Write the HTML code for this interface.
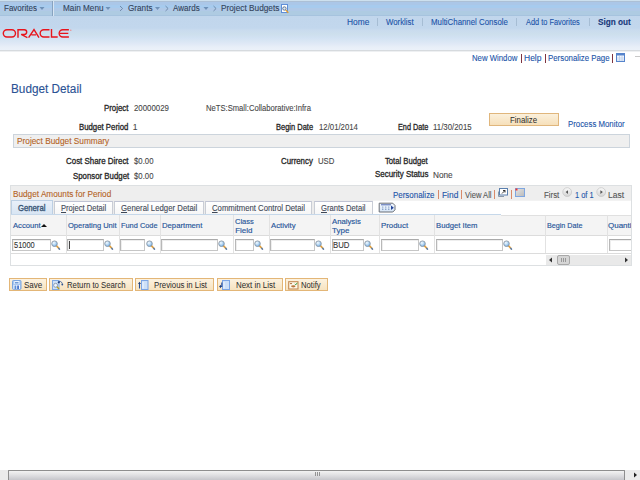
<!DOCTYPE html>
<html><head><meta charset="utf-8">
<style>
html,body{margin:0;padding:0;width:640px;height:480px;overflow:hidden;background:#fff;}
body{position:relative;font-family:"Liberation Sans",sans-serif;}
.a{position:absolute;}
svg.a{overflow:visible;}
.t{position:absolute;white-space:nowrap;line-height:12px;font-size:8px;color:#333;-webkit-text-stroke:0.1px currentColor;}
.vs{position:absolute;width:1px;top:215px;height:38px;background:#e2e2e2;}
.inp{position:absolute;top:239px;height:10px;border:1px solid #c6c6c6;border-top-color:#aaaaaa;border-left-color:#b8b8b8;background:#fff;box-shadow:inset 1px 1px 0 #eeeeee;}
.tab{position:absolute;top:201px;height:12px;border:1px solid #c9cdd5;border-top-color:#c0c4d4;border-bottom:none;background:linear-gradient(#fff,#f6f6f6);}
.btn{position:absolute;top:278px;height:11px;border:1px solid #e3b677;background:linear-gradient(#fcf2e0,#f7e3c0);}
.hsep{position:absolute;width:1px;top:18px;height:8px;background:#a6bdd4;}
.rsep{position:absolute;width:1px;top:54px;height:9px;background:#7e3440;}
.osep{position:absolute;width:1px;top:190px;height:9px;background:#d98a6a;}
</style></head><body>
<svg width="0" height="0" style="position:absolute">
<defs>
<radialGradient id="mg" cx="0.38" cy="0.35" r="0.75"><stop offset="0" stop-color="#f6fbff"/><stop offset="0.55" stop-color="#a8d0f2"/><stop offset="1" stop-color="#5e9ad6"/></radialGradient>
<symbol id="mag" viewBox="0 0 11 11">
 <path d="M5.6,5.9L8.1,8.6" stroke="#e0a040" stroke-width="1.6" stroke-linecap="round"/>
 <path d="M7.7,8.2L8.6,9.2" stroke="#5a80b4" stroke-width="1.3" stroke-linecap="round"/>
 <circle cx="3.5" cy="3.7" r="2.8" fill="url(#mg)" stroke="#8d96a0" stroke-width="0.85"/>
</symbol>
<linearGradient id="cg" x1="0" y1="0" x2="0" y2="1"><stop offset="0" stop-color="#fbfbfb"/><stop offset="1" stop-color="#d2d2d2"/></linearGradient>
</defs></svg>

<!-- top nav bar -->
<div class="a" style="left:0;top:0;width:640px;height:16px;background:linear-gradient(#cde0ee 0,#cde0ee 1px,#acc0d6 1px,#acc0d6 2px,#abc7e8 2px,#abc7e8 5px,#a7cbee 5px,#a7cbee 8px,#b0c9e7 8px,#b0c9e7 11px,#aecbe2 11px,#aecbe2 15px,#a6c3de 15px);"></div>
<div class="a" style="left:52px;top:1px;width:1px;height:15px;background:#87a3c0;"></div>
<div class="a" style="left:53px;top:1px;width:1px;height:15px;background:#d8e5f2;"></div>
<svg class="a" style="left:0;top:0" width="640" height="16">
 <g fill="#6f91b8">
  <path d="M39.5,7h5l-2.5,3z"/>
  <path d="M105.5,7h5l-2.5,3z"/>
  <path d="M155,7h5l-2.5,3z"/>
  <path d="M203.5,7h5l-2.5,3z"/>
 </g>
 <g fill="none" stroke="#6a84a4" stroke-width="0.9">
  <path d="M120,6l2.6,2.5l-2.6,2.5"/>
  <path d="M165.5,6l2.6,2.5l-2.6,2.5"/>
  <path d="M213.5,6l2.6,2.5l-2.6,2.5"/>
 </g>
 <rect x="281.5" y="4.5" width="6" height="8" fill="#fff" stroke="#5f8fd8" stroke-width="1"/>
 <circle cx="284.4" cy="8.5" r="1.7" fill="#dfe9f5" stroke="#556c88" stroke-width="0.9"/>
 <path d="M285.7,9.9l2.6,2.9" stroke="#e39a2c" stroke-width="1.3"/>
</svg>

<!-- header band -->
<div class="a" style="left:0;top:16px;width:640px;height:34px;background:linear-gradient(#c1d6ec 0,#c2d7ed 12px,#c9dbee 14px,#cddfed 18px,#d2e2f3 22px,#d9e6f4 25px,#e0e9f6 28px,#e8eff8 31px,#ebf1f9 34px);"></div>
<div class="a" style="left:0;top:50px;width:640px;height:1px;background:#d6dade;"></div>
<div class="a" style="left:0;top:51px;width:640px;height:1px;background:#eef0f2;"></div>

<!-- ORACLE logo -->
<svg class="a" style="left:0;top:0" width="80" height="45">
 <g fill="none" stroke="#e8141c" stroke-width="1.4">
  <rect x="3.3" y="29.7" width="12.2" height="7.3" rx="3.65"/>
  <path d="M18,37.7V29.7H24.3A2.4,2.4 0 0 1 24.3,34.5H21.2L27.4,37.7"/>
  <path d="M28.6,37.7L34,29.6L39,37.7M31.4,34.9H36"/>
  <path d="M49.5,29.7H43.8A3.65,3.65 0 0 0 43.8,37H49.5"/>
  <path d="M51.5,29V37H57.7"/>
  <path d="M68.9,29.7H62.8A3.65,3.65 0 0 0 62.8,37H68.9M60,33.35H68.3"/>
 </g>
 <circle cx="70.8" cy="30.2" r="0.7" fill="#e88"/>
</svg>

<div class="hsep" style="left:377px;"></div>
<div class="hsep" style="left:422px;"></div>
<div class="hsep" style="left:516px;"></div>
<div class="hsep" style="left:589px;"></div>

<div class="rsep" style="left:521px;"></div>
<div class="rsep" style="left:545px;"></div>
<div class="rsep" style="left:612px;"></div>
<svg class="a" style="left:616px;top:53px" width="9" height="9">
 <rect x="0.5" y="0.5" width="8" height="8" fill="#f2f6fc" stroke="#5684cc"/>
 <rect x="0.5" y="0.5" width="8" height="2" fill="#5684cc"/>
 <path d="M1,5h7M1,7h7M3.5,3v5M6,3v5" stroke="#bccfea" stroke-width="0.8"/>
</svg>
<div class="a" style="left:635px;top:56px;width:5px;height:1px;background:#c8c8c8;"></div>

<!-- finalize button -->
<div class="a" style="left:489px;top:113px;width:68px;height:11px;border:1px solid #e0b67c;background:linear-gradient(#fbf0dc,#f6e0ba);"></div>

<!-- section bar -->
<div class="a" style="left:13px;top:134px;width:615px;height:12px;background:#efefef;border:1px solid #ccd4dc;"></div>

<!-- grid -->
<div class="a" style="left:10px;top:185px;width:620px;height:79px;border:1px solid #dde0e2;background:#fff;"></div>
<div class="a" style="left:11px;top:186px;width:620px;height:14px;background:#eeeeee;"></div>
<div class="osep" style="left:438px;"></div>
<div class="osep" style="left:461px;"></div>
<div class="osep" style="left:494px;"></div>
<div class="osep" style="left:511px;"></div>

<!-- tabs -->
<div class="a" style="left:11px;top:200px;width:362px;height:14px;background:#ececec;"></div>
<div class="a" style="left:373px;top:200px;width:258px;height:1px;background:#f2f2f2;"></div>
<div class="tab" style="left:11px;top:200px;height:13px;width:40px;background:linear-gradient(#e9f0f9,#d8e5f3);border-color:#bccfe3;"></div>
<div class="tab" style="left:54px;width:57px;"></div>
<div class="tab" style="left:114px;width:88px;"></div>
<div class="tab" style="left:205px;width:105px;"></div>
<div class="tab" style="left:314px;width:57px;"></div>
<div class="a" style="left:11px;top:214px;width:490px;height:1px;background:#c6d8ea;"></div>

<!-- header row -->
<div class="a" style="left:11px;top:215px;width:620px;height:20px;background:#f4f4f4;"></div>
<div class="a" style="left:501px;top:215px;width:130px;height:1px;background:#e0e0e0;"></div>
<div class="a" style="left:11px;top:235px;width:620px;height:1px;background:#dcdcdc;"></div>
<div class="a" style="left:11px;top:253px;width:620px;height:1px;background:#dcdcdc;"></div>
<div class="vs" style="left:66px;"></div>
<div class="vs" style="left:119px;"></div>
<div class="vs" style="left:160px;"></div>
<div class="vs" style="left:233px;"></div>
<div class="vs" style="left:269px;"></div>
<div class="vs" style="left:330px;"></div>
<div class="vs" style="left:379px;"></div>
<div class="vs" style="left:434px;"></div>
<div class="vs" style="left:545px;"></div>
<div class="vs" style="left:607px;"></div>

<!-- inputs -->
<div class="inp" style="left:12px;width:37px;"></div>
<div class="inp" style="left:67px;width:35px;"></div>
<div class="inp" style="left:120px;width:23px;"></div>
<div class="inp" style="left:161px;width:55px;"></div>
<div class="inp" style="left:235px;width:17px;"></div>
<div class="inp" style="left:270px;width:43px;"></div>
<div class="inp" style="left:332px;width:30px;"></div>
<div class="inp" style="left:381px;width:36px;"></div>
<div class="inp" style="left:436px;width:65px;"></div>
<div class="inp" style="left:609px;width:40px;"></div>
<div class="a" style="left:69px;top:241px;width:1px;height:8px;background:#444;"></div>

<svg class="a" style="left:51px;top:240px" width="11" height="11"><use href="#mag"/></svg>
<svg class="a" style="left:104px;top:240px" width="11" height="11"><use href="#mag"/></svg>
<svg class="a" style="left:146px;top:240px" width="11" height="11"><use href="#mag"/></svg>
<svg class="a" style="left:218px;top:240px" width="11" height="11"><use href="#mag"/></svg>
<svg class="a" style="left:254px;top:240px" width="11" height="11"><use href="#mag"/></svg>
<svg class="a" style="left:315px;top:240px" width="11" height="11"><use href="#mag"/></svg>
<svg class="a" style="left:364px;top:240px" width="11" height="11"><use href="#mag"/></svg>
<svg class="a" style="left:419px;top:240px" width="11" height="11"><use href="#mag"/></svg>
<svg class="a" style="left:503px;top:240px" width="11" height="11"><use href="#mag"/></svg>

<!-- buttons -->
<div class="btn" style="left:9px;width:36px;"></div>
<div class="btn" style="left:49px;width:82px;"></div>
<div class="btn" style="left:135px;width:77px;"></div>
<div class="btn" style="left:217px;width:64px;"></div>
<div class="btn" style="left:285px;width:41px;"></div>
<!-- save icon -->
<svg class="a" style="left:12px;top:280px" width="10" height="10">
 <rect x="0.5" y="0.5" width="8.5" height="8.8" rx="0.8" fill="#a9c8f0" stroke="#7aa6e0"/>
 <rect x="2.3" y="1" width="5" height="3" fill="#eaf3fe"/>
 <rect x="3" y="2" width="3.5" height="1.5" fill="#6f9ad6"/>
 <rect x="1.5" y="5" width="6.5" height="4" fill="#f4f8ff"/>
 <rect x="2.5" y="5.5" width="1.8" height="3.5" fill="#5b8fd8"/>
 <rect x="5.3" y="5.5" width="1.5" height="3.5" fill="#2459c0"/>
</svg>
<!-- return to search icon -->
<svg class="a" style="left:51px;top:279px" width="13" height="12">
 <rect x="1.5" y="1.5" width="6.5" height="9" fill="#cfe2f8" stroke="#7fa9e2"/>
 <circle cx="4.6" cy="6.3" r="2" fill="#eef6ff" stroke="#7b8aa0" stroke-width="0.8"/>
 <path d="M6,7.8L8,10" stroke="#b8a020" stroke-width="1.3"/>
 <path d="M7.5,3C9,2 10.5,2.3 11.2,4.5" fill="none" stroke="#3a5f9a" stroke-width="0.9"/>
 <circle cx="7.8" cy="3.3" r="1.1" fill="#1e3f80"/>
 <circle cx="11.3" cy="5.5" r="0.9" fill="#2a4f90"/>
</svg>
<!-- previous icon -->
<svg class="a" style="left:138px;top:280px" width="12" height="11">
 <rect x="3.5" y="0.5" width="6.5" height="9" fill="#cde0f8" stroke="#7aa4e4"/>
 <path d="M5,2V8.5" stroke="#eef5ff" stroke-width="1"/>
 <path d="M1.5,8.5V3.5" stroke="#2a4e94" stroke-width="1.1"/>
 <path d="M0,4L1.5,1.8L3,4z" fill="#1e3f80"/>
</svg>
<!-- next icon -->
<svg class="a" style="left:219px;top:280px" width="12" height="11">
 <rect x="3.5" y="0.5" width="7" height="9" fill="#cde0f8" stroke="#7aa4e4"/>
 <path d="M5,2V8.5" stroke="#eef5ff" stroke-width="1"/>
 <path d="M2.8,2.5V6.5H1" fill="none" stroke="#2a4e94" stroke-width="1.1"/>
 <path d="M2,4.8L0,6.5L2,8.2z" fill="#1e3f80"/>
</svg>
<!-- notify icon -->
<svg class="a" style="left:288px;top:281px" width="11" height="9">
 <rect x="0.7" y="0.7" width="9.3" height="7.3" fill="#fdf8ea" stroke="#c58a55" stroke-width="1.1"/>
 <ellipse cx="3" cy="2.6" rx="1.2" ry="0.6" fill="#a86a38"/>
 <ellipse cx="5.3" cy="5.3" rx="2.2" ry="1.1" fill="#b8763e"/>
 <path d="M6.8,3L7.8,3.8L9.3,1.8" fill="none" stroke="#3aa040" stroke-width="1"/>
</svg>

<span class="t" style="left:4.06px;top:2px;font-size:8.5px;color:#33435a;transform:scaleX(0.9412);transform-origin:0 0;">Favorites</span>
<span class="t" style="left:62.79px;top:2px;font-size:8.5px;color:#33435a;transform:scaleX(0.9634);transform-origin:0 0;">Main Menu</span>
<span class="t" style="left:127.50px;top:2px;font-size:8.5px;color:#33435a;transform:scaleX(0.9600);transform-origin:0 0;">Grants</span>
<span class="t" style="left:173.00px;top:2px;font-size:8.5px;color:#33435a;transform:scaleX(0.9464);transform-origin:0 0;">Awards</span>
<span class="t" style="left:220.53px;top:2px;font-size:8.5px;color:#33435a;transform:scaleX(0.9729);transform-origin:0 0;">Project Budgets</span>
<span class="t" style="left:346.81px;top:16px;font-size:8.5px;color:#1a53a8;transform:scaleX(0.9857);transform-origin:0 0;">Home</span>
<span class="t" style="left:386.20px;top:16px;font-size:8.5px;color:#1a53a8;transform:scaleX(0.9200);transform-origin:0 0;">Worklist</span>
<span class="t" style="left:430.88px;top:16px;font-size:8.5px;color:#1a53a8;transform:scaleX(0.9244);transform-origin:0 0;">MultiChannel Console</span>
<span class="t" style="left:525.60px;top:16px;font-size:8.5px;color:#1a53a8;transform:scaleX(0.8694);transform-origin:0 0;">Add to Favorites</span>
<span class="t" style="left:597.70px;top:16px;font-size:8.5px;color:#17377a;font-weight:bold;transform:scaleX(0.9647);transform-origin:0 0;">Sign out</span>
<span class="t" style="left:472.29px;top:52px;font-size:8.5px;color:#1a53a8;transform:scaleX(0.9143);transform-origin:0 0;">New Window</span>
<span class="t" style="left:524.00px;top:52px;font-size:8.5px;color:#1a53a8;">Help</span>
<span class="t" style="left:547.68px;top:52px;font-size:8.5px;color:#1a53a8;transform:scaleX(0.9246);transform-origin:0 0;">Personalize Page</span>
<span class="t" style="left:10.52px;top:83px;font-size:12px;color:#2a5294;transform:scaleX(0.9803);transform-origin:0 0;">Budget Detail</span>
<span class="t" style="left:103.50px;top:102px;font-size:8.5px;color:#262626;-webkit-text-stroke:0.3px #262626;transform:scaleX(0.9259);transform-origin:0 0;">Project</span>
<span class="t" style="left:133.80px;top:102px;font-size:8.5px;color:#474747;transform:scaleX(0.9243);transform-origin:0 0;">20000029</span>
<span class="t" style="left:205.60px;top:102px;font-size:8.5px;color:#474747;transform:scaleX(0.8991);transform-origin:0 0;">NeTS:Small:Collaborative:Infra</span>
<span class="t" style="left:79.00px;top:121px;font-size:8.5px;color:#262626;-webkit-text-stroke:0.3px #262626;transform:scaleX(0.9167);transform-origin:0 0;">Budget Period</span>
<span class="t" style="left:132.80px;top:121px;font-size:8.5px;color:#474747;">1</span>
<span class="t" style="left:276.20px;top:121px;font-size:8.5px;color:#262626;-webkit-text-stroke:0.3px #262626;transform:scaleX(0.8810);transform-origin:0 0;">Begin Date</span>
<span class="t" style="left:318.59px;top:121px;font-size:8.5px;color:#474747;transform:scaleX(0.9146);transform-origin:0 0;">12/01/2014</span>
<span class="t" style="left:398.00px;top:121px;font-size:8.5px;color:#262626;-webkit-text-stroke:0.3px #262626;transform:scaleX(0.8571);transform-origin:0 0;">End Date</span>
<span class="t" style="left:433.28px;top:121px;font-size:8.5px;color:#474747;transform:scaleX(0.9220);transform-origin:0 0;">11/30/2015</span>
<span class="t" style="left:509.83px;top:114px;font-size:8.5px;color:#2a2a2a;transform:scaleX(0.9232);transform-origin:0 0;-webkit-text-stroke:0;">Finalize</span>
<span class="t" style="left:567.58px;top:118px;font-size:8.5px;color:#1a53a8;transform:scaleX(0.9217);transform-origin:0 0;">Process Monitor</span>
<span class="t" style="left:17.02px;top:135px;font-size:8.5px;color:#b4631f;transform:scaleX(0.9763);transform-origin:0 0;">Project Budget Summary</span>
<span class="t" style="left:66.00px;top:155px;font-size:8.5px;color:#262626;-webkit-text-stroke:0.3px #262626;transform:scaleX(0.9328);transform-origin:0 0;">Cost Share Direct</span>
<span class="t" style="left:133.80px;top:155px;font-size:8.5px;color:#474747;transform:scaleX(0.9143);transform-origin:0 0;">$0.00</span>
<span class="t" style="left:72.50px;top:170px;font-size:8.5px;color:#262626;-webkit-text-stroke:0.3px #262626;transform:scaleX(0.9221);transform-origin:0 0;">Sponsor Budget</span>
<span class="t" style="left:133.80px;top:170px;font-size:8.5px;color:#474747;transform:scaleX(0.9143);transform-origin:0 0;">$0.00</span>
<span class="t" style="left:281.20px;top:155px;font-size:8.5px;color:#262626;-webkit-text-stroke:0.3px #262626;transform:scaleX(0.9229);transform-origin:0 0;">Currency</span>
<span class="t" style="left:318.09px;top:155px;font-size:8.5px;color:#474747;transform:scaleX(0.9118);transform-origin:0 0;">USD</span>
<span class="t" style="left:384.80px;top:155px;font-size:8.5px;color:#262626;-webkit-text-stroke:0.3px #262626;transform:scaleX(0.9042);transform-origin:0 0;">Total Budget</span>
<span class="t" style="left:375.20px;top:168px;font-size:8.5px;color:#262626;-webkit-text-stroke:0.3px #262626;transform:scaleX(0.9351);transform-origin:0 0;">Security Status</span>
<span class="t" style="left:432.93px;top:169px;font-size:8.5px;color:#474747;transform:scaleX(0.9684);transform-origin:0 0;">None</span>
<span class="t" style="left:12.63px;top:188px;font-size:8.5px;color:#b4631f;transform:scaleX(0.9670);transform-origin:0 0;">Budget Amounts for Period</span>
<span class="t" style="left:392.87px;top:189px;font-size:8.5px;color:#1a53a8;transform:scaleX(0.9349);transform-origin:0 0;">Personalize</span>
<span class="t" style="left:441.81px;top:189px;font-size:8.5px;color:#1a53a8;transform:scaleX(0.9867);transform-origin:0 0;">Find</span>
<span class="t" style="left:465.00px;top:189px;font-size:8.5px;color:#555;transform:scaleX(0.8966);transform-origin:0 0;">View All</span>
<span class="t" style="left:544.08px;top:189px;font-size:8.5px;color:#555;transform:scaleX(0.9250);transform-origin:0 0;">First</span>
<span class="t" style="left:574.83px;top:189px;font-size:8.5px;color:#1a53a8;transform:scaleX(0.8750);transform-origin:0 0;">1 of 1</span>
<span class="t" style="left:608.00px;top:189px;font-size:8.5px;color:#555;">Last</span>
<span class="t" style="left:18.00px;top:202px;font-size:8.5px;color:#365474;-webkit-text-stroke:0.35px #365474;transform:scaleX(0.9067);transform-origin:0 0;">General</span>
<span class="t" style="left:61.00px;top:202px;font-size:8.5px;color:#3e4856;transform:scaleX(0.8920);transform-origin:0 0;"><u>P</u>roject Detail</span>
<span class="t" style="left:121.00px;top:202px;font-size:8.5px;color:#3e4856;transform:scaleX(0.9157);transform-origin:0 0;"><u>G</u>eneral Ledger Detail</span>
<span class="t" style="left:212.00px;top:202px;font-size:8.5px;color:#3e4856;transform:scaleX(0.9118);transform-origin:0 0;"><u>C</u>ommitment Control Detail</span>
<span class="t" style="left:321.00px;top:202px;font-size:8.5px;color:#3e4856;transform:scaleX(0.8980);transform-origin:0 0;"><u>G</u>rants Detail</span>
<span class="t" style="left:12.80px;top:220px;font-size:8px;color:#28569a;-webkit-text-stroke:0.16px #28569a;transform:scaleX(0.9552);transform-origin:0 0;">Account</span>
<span class="t" style="left:68.00px;top:220px;font-size:8px;color:#28569a;-webkit-text-stroke:0.16px #28569a;transform:scaleX(0.9412);transform-origin:0 0;">Operating Unit</span>
<span class="t" style="left:121.00px;top:220px;font-size:8px;color:#28569a;-webkit-text-stroke:0.16px #28569a;transform:scaleX(0.9231);transform-origin:0 0;">Fund Code</span>
<span class="t" style="left:161.50px;top:220px;font-size:8px;color:#28569a;-webkit-text-stroke:0.16px #28569a;transform:scaleX(0.9643);transform-origin:0 0;">Department</span>
<span class="t" style="left:270.80px;top:220px;font-size:8px;color:#28569a;-webkit-text-stroke:0.16px #28569a;transform:scaleX(0.9680);transform-origin:0 0;">Activity</span>
<span class="t" style="left:381.00px;top:220px;font-size:8px;color:#28569a;-webkit-text-stroke:0.16px #28569a;transform:scaleX(0.9815);transform-origin:0 0;">Product</span>
<span class="t" style="left:435.80px;top:220px;font-size:8px;color:#28569a;-webkit-text-stroke:0.16px #28569a;transform:scaleX(0.9628);transform-origin:0 0;">Budget Item</span>
<span class="t" style="left:547.00px;top:220px;font-size:8px;color:#28569a;-webkit-text-stroke:0.16px #28569a;transform:scaleX(0.8974);transform-origin:0 0;">Begin Date</span>
<span class="t" style="left:608.00px;top:220px;font-size:8px;color:#28569a;-webkit-text-stroke:0.16px #28569a;">Quantity</span>
<span class="t" style="left:235.20px;top:216px;font-size:8px;color:#28569a;-webkit-text-stroke:0.16px #28569a;transform:scaleX(0.9400);transform-origin:0 0;">Class</span>
<span class="t" style="left:235.20px;top:225px;font-size:8px;color:#28569a;-webkit-text-stroke:0.16px #28569a;">Field</span>
<span class="t" style="left:332.00px;top:216px;font-size:8px;color:#28569a;-webkit-text-stroke:0.16px #28569a;transform:scaleX(0.9667);transform-origin:0 0;">Analysis</span>
<span class="t" style="left:332.00px;top:225px;font-size:8px;color:#28569a;-webkit-text-stroke:0.16px #28569a;">Type</span>
<span class="t" style="left:14.30px;top:239px;font-size:8.5px;color:#333;transform:scaleX(0.8750);transform-origin:0 0;">51000</span>
<span class="t" style="left:332.89px;top:239px;font-size:8.5px;color:#333;transform:scaleX(0.9118);transform-origin:0 0;">BUD</span>
<span class="t" style="left:24.06px;top:279px;font-size:8.5px;color:#2a2a2a;transform:scaleX(0.9444);transform-origin:0 0;-webkit-text-stroke:0;">Save</span>
<span class="t" style="left:66.59px;top:279px;font-size:8.5px;color:#2a2a2a;transform:scaleX(0.9127);transform-origin:0 0;-webkit-text-stroke:0;">Return to Search</span>
<span class="t" style="left:153.68px;top:279px;font-size:8.5px;color:#2a2a2a;transform:scaleX(0.9193);transform-origin:0 0;-webkit-text-stroke:0;">Previous in List</span>
<span class="t" style="left:235.57px;top:279px;font-size:8.5px;color:#2a2a2a;transform:scaleX(0.9317);transform-origin:0 0;-webkit-text-stroke:0;">Next in List</span>
<span class="t" style="left:301.10px;top:279px;font-size:8.5px;color:#2a2a2a;transform:scaleX(0.9048);transform-origin:0 0;-webkit-text-stroke:0;">Notify</span>

<!-- clip right side of grid -->
<div class="a" style="left:632px;top:186px;width:8px;height:80px;background:#fff;"></div>
<div class="a" style="left:631px;top:185px;width:1px;height:81px;background:#dde0e2;"></div>

<!-- sort arrow -->
<svg class="a" style="left:41px;top:223px" width="6" height="5"><path d="M0,4L3,1L6,4z" fill="#111"/></svg>
<!-- view all icon -->
<svg class="a" style="left:497px;top:187px" width="12" height="11">
 <rect x="2.5" y="1.5" width="8" height="6.5" fill="#fff" stroke="#5a7fae"/>
 <path d="M1.5,4.5V9.5H7" fill="none" stroke="#8a98aa"/>
 <path d="M5,6.5L8,3.5M6,3.5H8V5.5" fill="none" stroke="#222" stroke-width="0.9"/>
</svg>
<!-- spreadsheet icon -->
<svg class="a" style="left:514px;top:187px" width="12" height="11">
 <defs><linearGradient id="sg" x1="0" y1="0" x2="1" y2="1"><stop offset="0" stop-color="#e5e5e5"/><stop offset="1" stop-color="#b9b9b9"/></linearGradient></defs>
 <rect x="1.5" y="1.5" width="9" height="8" fill="url(#sg)" stroke="#7ea6e0"/>
 <rect x="1.5" y="1.5" width="2" height="2" fill="#e33"/>
</svg>
<!-- prev / next circles -->
<svg class="a" style="left:562px;top:187px" width="11" height="11">
 <circle cx="5.2" cy="5.1" r="4.4" fill="url(#cg)" stroke="#c8c8c8" stroke-width="0.8"/>
 <path d="M3.6,5.1L6,3.2V7z" fill="#555"/>
</svg>
<svg class="a" style="left:596px;top:187px" width="11" height="11">
 <circle cx="5.2" cy="5.1" r="4.4" fill="url(#cg)" stroke="#c8c8c8" stroke-width="0.8"/>
 <path d="M6.8,5.1L4.4,3.2V7z" fill="#555"/>
</svg>
<!-- show all tabs icon -->
<svg class="a" style="left:378px;top:202px" width="19" height="12">
 <defs><linearGradient id="tg" x1="0" y1="0" x2="0" y2="1"><stop offset="0" stop-color="#f4f9ff"/><stop offset="1" stop-color="#d4e4f6"/></linearGradient></defs>
 <path d="M1.2,1.2H14.8L17,3.5V7.8L14.8,10H1.2z" fill="url(#tg)" stroke="#6b6f76" stroke-width="1"/>
 <path d="M3,2.8H13" stroke="#3a57a8" stroke-width="0.9"/>
 <g fill="#5572a8"><circle cx="4.8" cy="5" r="0.6"/><circle cx="7.8" cy="5" r="0.6"/><circle cx="10.8" cy="5" r="0.6"/><circle cx="4.8" cy="7.2" r="0.6"/><circle cx="7.8" cy="7.2" r="0.6"/><circle cx="10.8" cy="7.2" r="0.6"/></g>
 <path d="M13,3.5L15.8,5.8L13,8.1z" fill="#23449a"/>
</svg>
<!-- grid scrollbar -->
<svg class="a" style="left:546px;top:255px" width="85" height="10">
 <rect x="0" y="0" width="85" height="10" fill="#e9e9e9"/>
 <path d="M3,5L6,2.5V7.5z" fill="#333"/>
 <path d="M82,5L79,2.5V7.5z" fill="#333"/>
 <rect x="11.5" y="0.5" width="12" height="9" rx="1.5" fill="#d5d5d5" stroke="#a9a9a9"/>
 <path d="M15.5,3V7M17.5,3V7M19.5,3V7" stroke="#888" stroke-width="0.8"/>
</svg>

<!-- page horizontal scrollbar -->
<div class="a" style="left:0;top:470px;width:640px;height:10px;background:#ebebeb;"></div>
<div class="a" style="left:8px;top:470px;width:615px;height:9px;border:1px solid #8e8e8e;border-bottom:none;border-radius:1px 1px 0 0;background:linear-gradient(#f2f2f2,#e2e2e4 40%,#c6c6cb);"></div>
<svg class="a" style="left:0;top:470px" width="640" height="10">
 <path d="M315.5,2V6M317.5,2V6M319.5,2V6" stroke="#8a8a8a" stroke-width="0.9"/>
 <path d="M634,2.5L637,5L634,7.5z" fill="#222"/>
</svg>

</body></html>
